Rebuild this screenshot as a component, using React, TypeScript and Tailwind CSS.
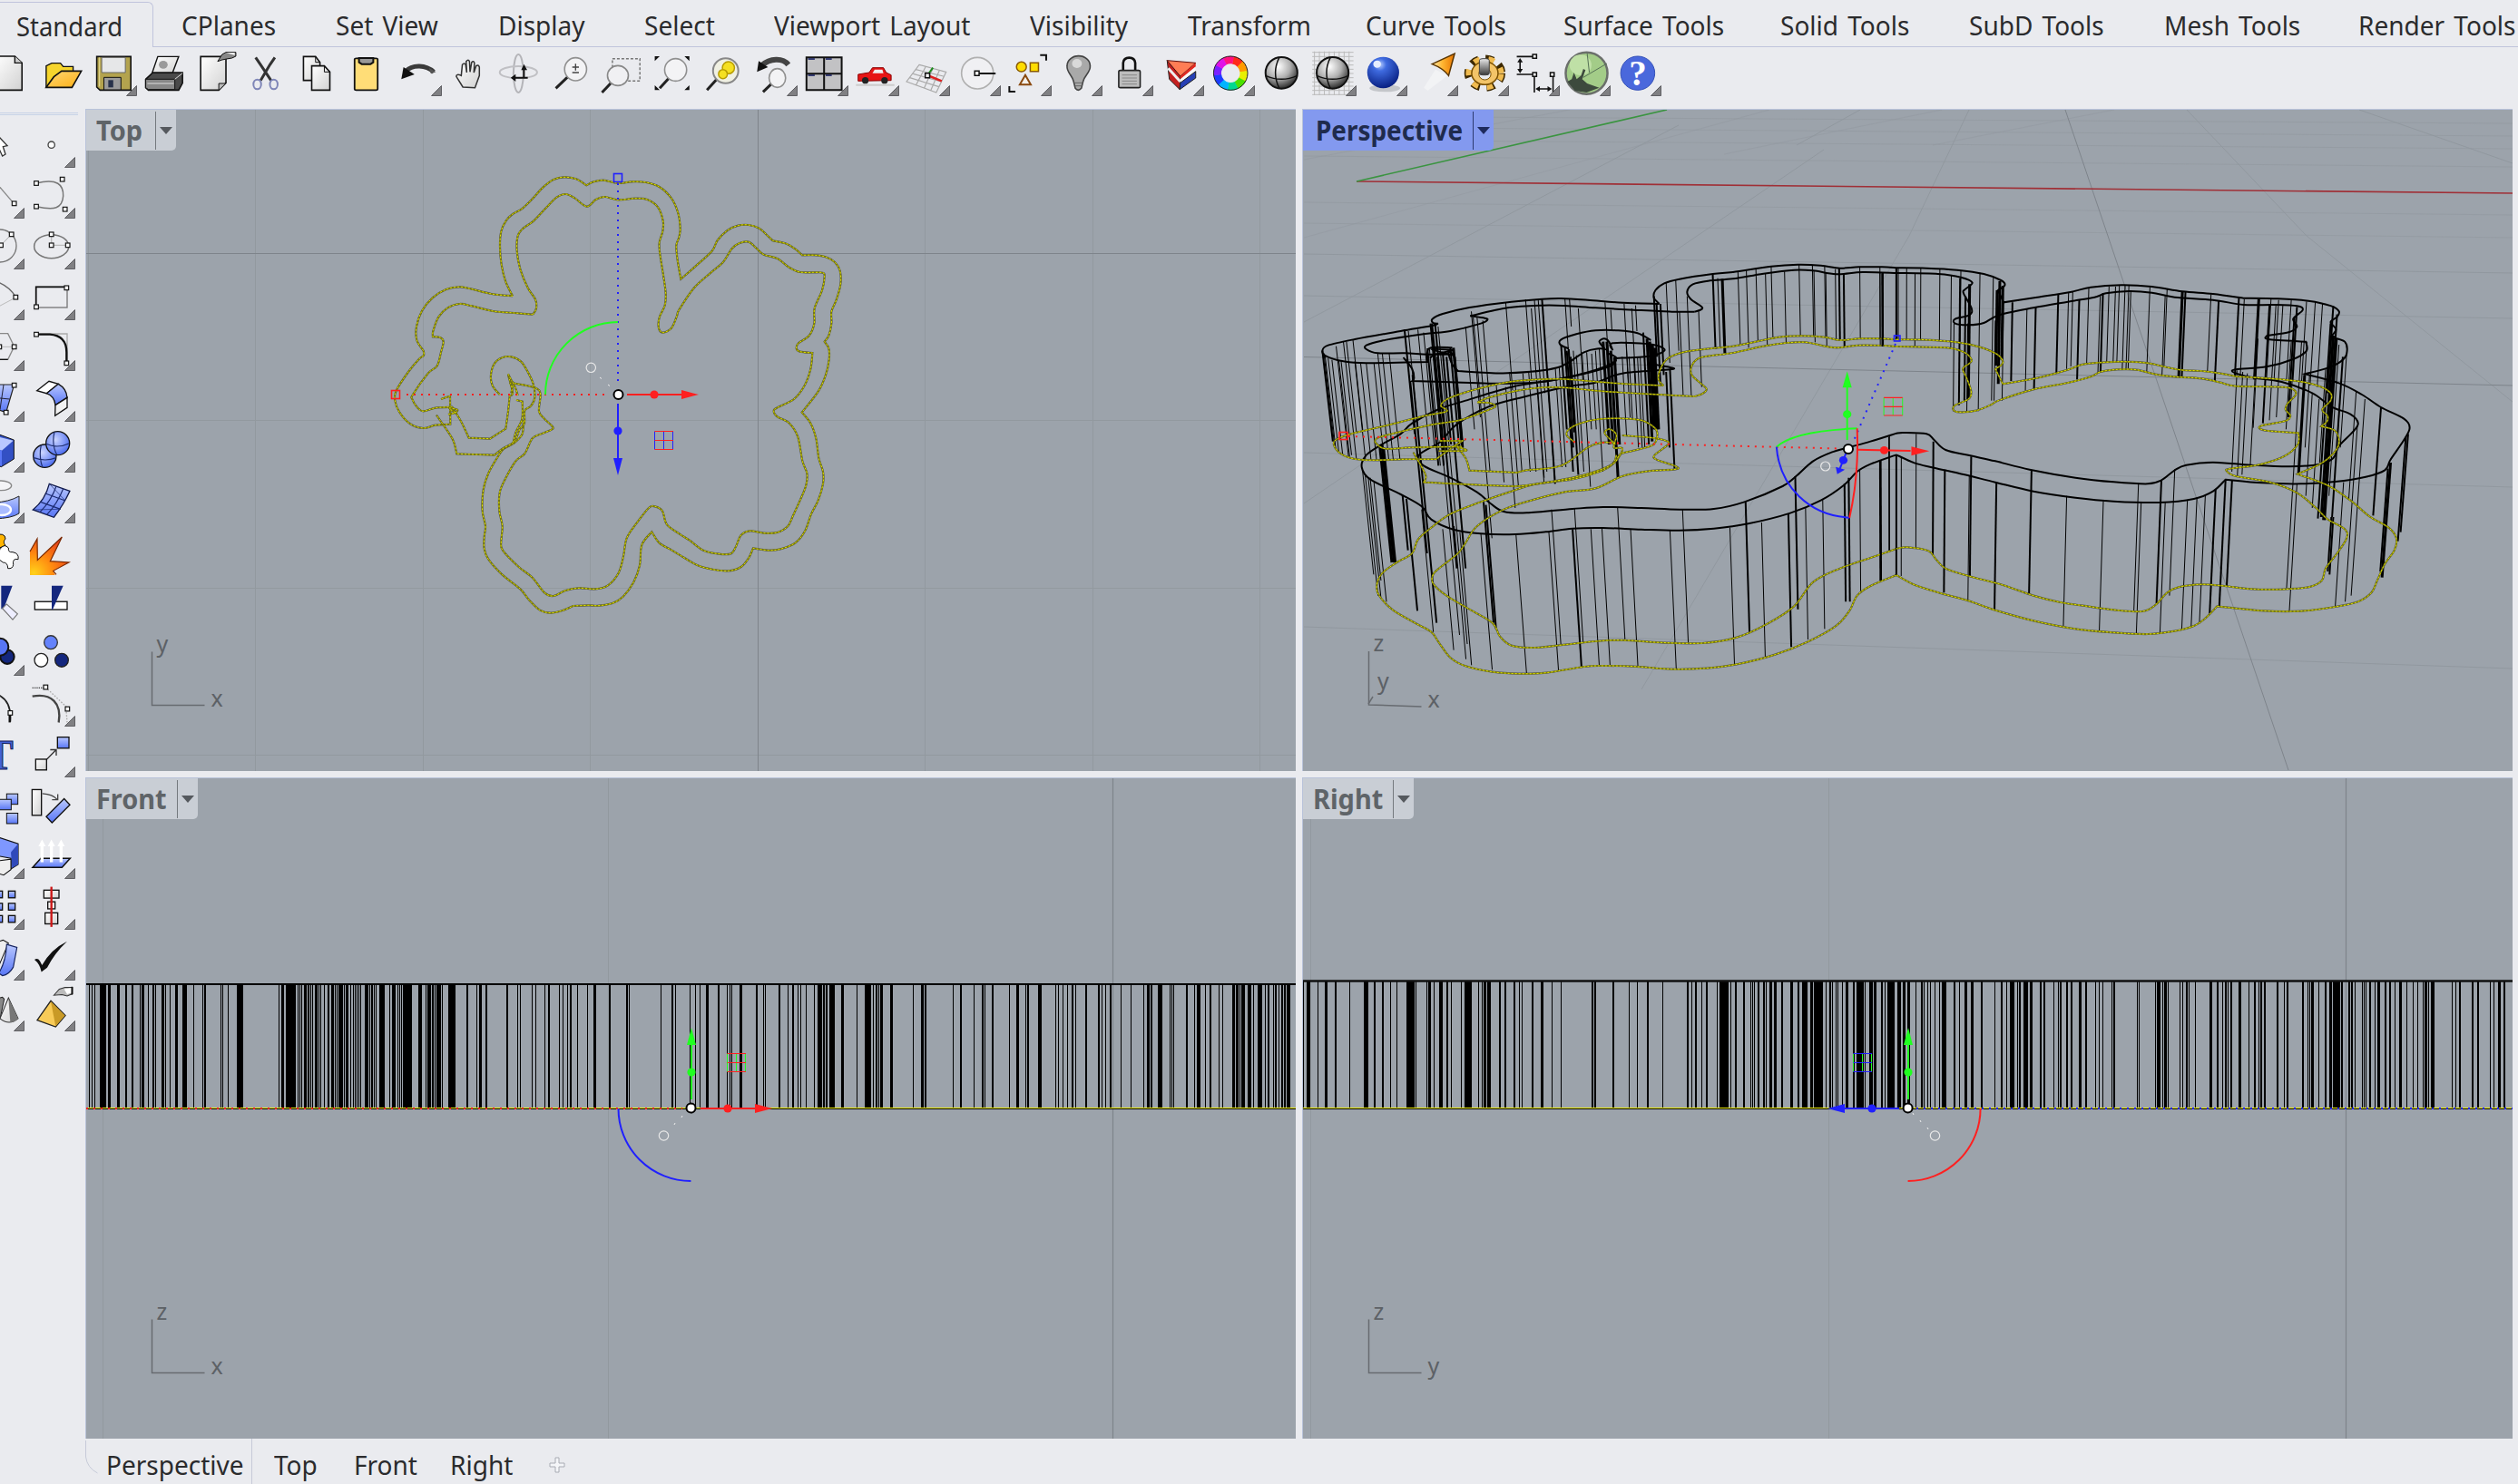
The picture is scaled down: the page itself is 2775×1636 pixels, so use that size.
import React from "react";

/* ---------- geometry helpers ---------- */

// Smooth path through points; "|" marks a sharp corner.
function smooth(src: string): string {
  let out = "";
  let prev: number[] | null = null;
  for (const part of src.split("|")) {
    const pts = part.trim().split(/\s+/).map((p) => p.split(",").map(Number));
    if (prev) pts.unshift(prev);
    else out += `M${pts[0][0]} ${pts[0][1]}`;
    for (let i = 0; i < pts.length - 1; i++) {
      const a = pts[Math.max(0, i - 1)];
      const b = pts[i];
      const c = pts[i + 1];
      const d = pts[Math.min(pts.length - 1, i + 2)];
      out += `C${b[0] + (c[0] - a[0]) / 6} ${b[1] + (c[1] - a[1]) / 6} ${c[0] - (d[0] - b[0]) / 6} ${c[1] - (d[1] - b[1]) / 6} ${c[0]} ${c[1]}`;
    }
    prev = pts[pts.length - 1];
  }
  return out;
}

function Selected({ d }: { d: string }) {
  return (
    <>
      <path d={d} fill="none" stroke="#3a3c30" strokeWidth={2.2} strokeOpacity={0.7} />
      <path d={d} fill="none" stroke="#808000" strokeWidth={1.5} />
      <path d={d} fill="none" stroke="#e0e000" strokeWidth={1} strokeDasharray="2 2" />
    </>
  );
}

/* ---------- curve data ---------- */

const topCurves = [
  "435,439 412,392 398,335 393,275 397,225 413,190 435,168 465,151 500,118 535,80 570,54 605,46 645,52 679,73 | 700,62 735,56 783,66 830,61 875,63 920,78 960,116 982,165 989,215 985,245 976,272 980,320 991,383 | 1040,340 1094,290 1112,255 1145,222 1180,206 1215,204 1250,215 1275,237 1295,256 | 1340,266 1370,284 1392,304 | 1435,304 1470,310 1500,327 1517,355 1519,400 1505,452 1489,490 1489,530 1480,570 1466,590 | 1480,612 1481,650 1470,700 1445,755 1391,824 | 1420,860 1438,910 1447,975 1461,1020 1461,1060 1445,1115 1422,1160 1402,1215 1370,1255 1320,1276 1280,1280 1230,1273 | 1215,1306 1190,1335 1150,1348 1100,1344 1045,1329 990,1297 960,1279 920,1256 895,1219 | 862,1262 855,1330 835,1385 800,1433 765,1455 720,1463 685,1462 635,1464 | 600,1479 560,1487 525,1478 490,1445 460,1408 400,1360 355,1310 341,1275 341,1235 345,1200 335,1150 338,1080 355,1025 385,972 405,945 440,925 467,895 470,850",
  "435,439 365,432 300,416 260,409 215,417 170,445 135,488 117,540 118,585 140,620 | 141,635 125,648 90,690 50,752 46,785 60,822 95,861 140,876 180,866 229,863 | 228,770 | 198,780",
  "502,500 440,495 370,489 300,472 260,465 220,478 190,508 172,555 171,574 | 195,576 206,590 198,625 185,670 155,695 105,765 103,780 120,808 140,820 180,809 235,806 | 265,855 290,908 | 360,911 | 412,878 | 420,820 425,770 | 435,758 420,700",
  "502,500 513,480 510,450 485,412 460,350 449,290 452,240 470,215 505,190 545,148 580,113 610,102 640,115 680,143 710,120 740,111 783,121 840,116 880,120 915,145 932,190 931,225 920,262 922,300 933,370 941,430 938,470 920,510 918,545 932,560 960,545 978,505 985,485 1035,412 1090,362 1130,328 1160,282 1185,264 1215,260 1240,280 1265,302 1310,315 1350,345 1385,360 1430,361 1460,362 1466,375 1458,420 1433,480 1432,530 1415,570 1380,595 1373,612 1385,623 1426,627 | 1420,680 1400,735 1365,780 1310,808 1298,820 1310,838 1350,860 1378,905 1393,985 1408,1025 1405,1065 1385,1115 1362,1165 1345,1200 1310,1221 1265,1223 1220,1216 1190,1230 1172,1270 1155,1292 1110,1291 1065,1280 1020,1247 990,1228 945,1195 930,1150 905,1135 885,1140 845,1190 812,1240 801,1300 785,1355 750,1396 710,1408 655,1405 610,1413 570,1431 540,1420 500,1370 455,1335 402,1280 397,1250 401,1200 391,1150 392,1090 410,1045 445,985 475,960 500,910 530,895 565,880 566,870 540,845 522,820 527,765 515,745 480,735 435,727",
  "392,765 368,735 363,700 375,662 400,643 430,640 462,655 485,690 503,730 508,775 495,803 475,818 474,860 458,880 440,920 400,945 375,965 | 250,961 | 235,910 183,833",
  "420,697 432,720 445,745 452,768",
  "425,730 437,726 430,760",
  "447,783 467,788 | 466,845 445,890 437,925",
  "222,830 245,825 252,815 225,810 250,828",
];

const perspBottomL = [
  "958,495 860,490 780,482 700,474 650,474 560,482 480,503 400,535 375,560 390,575 385,583 330,596 240,625 140,655 100,675 96,695 115,722 150,738 200,742 280,739 362,739 | 400,705 432,678 | 372,678",
  "1040,531 960,526 860,519 780,512 700,502 650,501 580,511 500,535 471,551 | 500,552 518,562 505,573 430,608 350,625 230,660 206,672 205,685 230,704 300,700 430,697",
  "412,690 440,735 450,776 | 575,783 | 600,775 690,760 760,700 800,683 830,687 | 805,655 808,643 820,640 835,660 828,700 850,702 840,735 825,752",
  "370,712 442,710 410,695",
  "958,495 945,475 950,440 970,405 1010,385 1070,374 1140,365 1200,350 1260,335 1320,331 1380,335 1420,345 1470,340 1530,340 1568,343",
  "1040,531 1060,522 1071,507 1055,487 1032,460 1032,430 1050,405 1080,397 1140,387 1220,365 1280,354 1330,352 1370,362 1410,370 1470,362 1530,363 1568,366",
  "1568,1122 1500,1158 1465,1190 1445,1240 1410,1290 1340,1340 1250,1385 1150,1417 1070,1430 980,1433 880,1424 800,1422 750,1425 650,1445 580,1448 510,1442 440,1423 400,1395 370,1345 350,1310 310,1282 250,1238 215,1192 207,1160 220,1118 260,1080 300,1050 315,1005 350,965 400,920 480,880 560,845 620,822 720,805 790,780 825,755 835,725",
  "1568,1035 1500,1065 1420,1100 1350,1145 1300,1225 1230,1283 1150,1328 1060,1347 950,1345 850,1337 780,1341 700,1352 620,1362 560,1355 530,1325 510,1280 450,1235 390,1190 355,1150 355,1120 375,1095 420,1050 440,1015 470,960 540,905 620,872 700,847 780,835 850,795 920,778 990,772 990,762 940,740 935,725 970,690 965,678 930,668 850,660",
  "725,682 705,660 710,640 740,620 790,606 850,604 900,610 935,635 942,660 930,692 880,710 845,722 830,750 790,775 720,800 600,825 540,827 330,815 | 335,790 303,716",
];

const perspBottomR = [
  "71,343 150,344 230,352 290,368 335,392 350,415 345,428 330,440 | 350,490 | 440,470 520,443 560,425 620,418 670,416 730,421 780,435 820,444 870,447 920,455 960,465 | 1050,472 1130,482 1180,498 1208,520 1208,545 1186,575 1200,595 1198,615 1183,630 | 1220,645 1230,685 1215,720 1180,755 1121,788 | 1200,825 1260,875 1310,928 1360,965 1380,1000 1375,1040 1350,1085 1330,1140 1315,1180 1280,1210 1220,1227 1130,1241 1030,1240 911,1225 | 880,1265 850,1290 800,1307 730,1317 640,1312 540,1300 430,1273 330,1238 260,1207 190,1183 120,1155 71,1122",
  "71,366 150,368 210,371 250,386 268,410 262,422 245,440 255,470 267,515 260,540 225,560 220,575 235,583 280,578 320,558 340,544 430,508 520,486 580,466 605,450 650,442 700,443 750,458 800,466 870,472 920,485 960,497 1080,500 1110,508 1117,525 1095,555 1090,575 1103,595 1090,612 1030,627 1022,637 1045,645 1124,652 | 1122,690 1085,730 1020,757 945,770 936,778 960,795 1050,815 1120,850 1170,900 1200,937 1245,970 1250,1000 1225,1050 1195,1100 1185,1140 1150,1162 1080,1169 1000,1168 930,1158 870,1153 810,1162 780,1180 750,1220 715,1242 640,1237 560,1223 500,1212 430,1190 350,1155 260,1125 200,1100 175,1070 155,1042 100,1030 71,1035",
];

const perspTopL = [
  "947,225 850,221 760,212 690,207 640,209 560,218 450,237 380,258 353,275 355,288 368,290 | 350,298 270,315 150,342 80,362 65,380 75,398 120,415 180,421 340,417 | 345,372 405,370",
  "1040,251 980,251 880,245 780,238 700,231 640,230 550,238 452,265 | 490,272 497,278 480,290 400,315 330,325 220,347 180,362 180,375 210,388 280,388 340,392 410,392 | 395,385 405,425 420,447 | 550,454 680,436 750,385 790,373 805,375 | 790,350 803,340 815,350 825,378 | 825,355 920,358 958,372 955,385 920,398 830,405",
  "347,405 360,392 410,378 | 350,375 408,395",
  "277,402 300,440 305,470 300,480 | 400,484 500,488 620,485 700,470 800,435 835,405 810,388",
  "710,373 688,360 690,343 730,325 780,313 840,313 890,322 925,345",
  "947,225 933,205 937,180 960,157 1000,143 1087,126 1140,120 1240,101 1310,95 1370,98 1420,107 1470,103 1530,103 1568,106",
  "1040,251 1060,238 1030,210 1020,185 1035,160 1080,148 1140,142 1220,125 1300,113 1350,115 1410,127 1480,120 1568,123",
  "1568,724 1500,755 1465,780 1430,825 1370,875 1290,917 1180,952 1090,968 1000,974 900,971 800,966 720,968 650,979 570,987 480,985 410,972 350,938 325,895 270,855 190,805 168,765 180,725 220,690 270,655 300,620 370,573 440,545 560,500 680,475 770,450 820,430 835,410",
  "1568,653 1500,680 1442,700 1400,715 1350,745 1305,795 1270,828 1170,880 1090,903 1000,905 900,900 800,897 720,903 600,916 540,912 505,885 470,848 400,800 330,760 318,725 375,680 415,625 500,565 600,530 700,500 780,485 850,455 975,442 975,435 930,425",
];

const perspTopR = [
  "71,106 150,107 230,113 300,126 345,147 355,163 337,180 | 352,220 | 440,203 530,185 580,170 660,163 740,168 820,184 900,192 980,206 | 1070,208 1150,215 1210,232 1230,250 1225,268 1208,285 1222,310 1208,335 | 1245,350 1250,390 1235,415 1200,437 1141,457 | 1230,487 1290,525 1340,567 1400,605 1415,635 1400,675 1365,740 1350,775 1300,797 1220,813 1130,820 1030,817 933,806 | 900,845 850,870 760,882 640,878 540,866 430,845 330,815 250,790 170,767 120,752 71,724",
  "71,123 180,126 240,137 270,155 250,178 247,190 268,240 262,262 225,275 225,290 260,295 300,288 340,262 430,238 520,218 590,203 620,190 680,183 740,188 800,203 900,212 980,228 1060,228 1120,232 1135,245 1110,275 1120,300 1100,318 1042,330 | 1045,342 1143,350 | 1145,380 1110,408 1040,433 960,442 955,452 1000,468 1080,483 1160,520 1210,565 1260,590 1280,620 1265,650 1230,695 1215,735 1180,755 1100,763 1000,758 900,749 830,758 800,775 765,808 730,820 640,814 540,800 420,773 330,745 265,727 200,708 170,675 150,655 90,651 71,653",
];

// Wall edges: x, top, bottom and an optional width.
const wallsL =
  "65,380,680,2 69,388,690 72,395,705 80,405,715 90,410,725 101,365,733 108,412,730 114,414,725 120,350,738 150,415,740 128,350,650 145,345,645 165,420,740 180,422,742 200,420,742 210,390,742 222,390,742 240,390,740 170,775,1120 177,790,1190 190,800,1140 215,690,1080,3 221,690,1080,3 226,700,1080,2 185,800,1195 200,815,1210 280,310,655,2 290,315,650 275,860,1040,2 285,870,1240,2 295,480,1050,2 301,460,1280,2 315,310,700 325,905,1310 330,320,700 340,372,760,2 348,290,760,2 352,290,720,2 360,290,720,2 368,300,1350 345,370,760 355,380,1320 366,400,1100,2 380,385,690,2 390,400,1100,2 400,370,700,2 408,370,700,3 412,400,700,2 380,970,1370 410,960,1400 425,980,1420 440,300,640 455,250,600 460,270,1000 470,270,780 485,280,560 487,880,1280,2 493,890,1300,2 480,985,1435 520,489,815 545,220,510 555,450,830 572,990,1448 545,500,900 570,490,780 590,455,780 597,210,480 605,448,780 612,240,820 620,210,780 630,210,520 640,210,820,2 658,980,1440 665,905,1355 628,490,800 655,480,810 675,440,765 685,435,765 700,208,475 712,210,300 720,970,1425,2 725,900,1345 735,240,480 690,360,640,2 700,370,780,2 705,380,700,2 710,375,650,2 715,400,790,2 722,380,720 730,395,780 745,390,830 757,385,640 770,390,640 780,380,780 790,375,650 768,970,1425 797,968,1420 800,350,690,3 810,350,680,3 805,220,480 820,380,800,3 830,400,690,3 820,245,310 838,900,1338 855,225,490 850,400,660 860,350,600 868,400,605 872,972,1424 875,240,490 885,230,315 880,400,700 890,400,700 897,400,700 905,320,690,2 915,340,680,3 922,350,640,3 928,360,640,4 935,370,640,3 975,975,1433 1008,905,1345 933,200,400,2 940,225,490,2 950,225,460,2 965,450,700,2 975,440,770,2 965,155,420 990,145,380 1000,250,530 1020,200,528 1050,245,500 1087,127,375,2 1100,140,370 1112,142,388,3 1153,118,362 1175,115,370 1200,107,350 1225,125,365 1240,102,340 1275,118,355 1313,96,332 1348,99,333 1352,115,352 1380,100,338 1383,122,365 1408,110,342 1418,107,345,2 1430,125,368,2 1472,104,340 1525,122,365 1532,122,363,2 1132,965,1418 1173,880,1312,2 1215,948,1395 1285,918,1360,2 1303,795,1235,2 1330,898,1335 1375,872,1300 1432,820,1210,2 1443,800,1210,2 1472,775,1175 1525,742,1140,2 1548,665,1045";

const wallsR =
  "28,104,342 34,124,366,2 71,107,343,2 76,107,343 98,108,344 120,125,368 135,108,345 185,109,345 215,130,372 240,115,350 222,290,580 238,140,560,2 252,200,545,2 263,160,540,3 258,290,580 290,122,580 325,135,545 330,280,545 335,180,430,3 342,150,490,3 350,165,410,3 352,220,545 375,220,480,2 413,242,512 436,235,505,2 495,195,455,2 522,188,440 533,185,432 550,212,475,2 575,172,425 605,195,452 612,190,450,2 628,168,418 645,168,415 655,163,415 670,163,440 680,163,440 685,185,440 735,170,450 780,176,435 775,195,460 820,184,465,3 828,186,465,2 895,193,450 915,215,480,2 968,205,465,2 982,210,465 1020,210,475,3 1048,230,620,2 1052,210,475 1065,228,610 1072,212,475 1083,230,600 1105,213,475 1120,235,480,2 1113,270,600,2 1117,275,600 1145,217,480 1168,218,495 1187,222,500 1215,232,520,2 1225,260,560,2 963,445,780 978,450,795 990,455,790 1018,340,635 1010,470,765 1105,350,640 1140,460,790,3 1146,350,640 1153,460,700 1120,820,1242 1132,350,1165 1160,520,860 1178,540,900 1195,440,750 1208,290,935,2 1215,330,930,3 1222,340,940,4 1230,360,860 1240,400,930,2 1250,390,700 1215,930,1120,2 1210,930,1110,2 1242,815,1225 1275,515,870 1278,630,1210 1298,540,1190 1340,567,925,2 1365,750,1130,3 1358,770,1110,2 1405,665,1010,2 1411,655,980,2 30,742,1140,2 53,660,1040 71,725,1122,2 84,730,1125 123,655,1032 168,680,1055,2 198,773,1180,2 267,730,1125,2 262,793,1207 333,817,1238,2 425,775,1185,2 517,860,1292 613,877,1306 705,820,1240 712,882,1316 765,808,1215,2 775,882,1312 800,772,1190 833,876,1300 858,868,1292 880,858,1283 907,838,1250,2 933,806,1225,2 950,808,1158,2";

// Silhouette bars: start and width in each half of the elevation views.
const frontL =
  "18 2,25 2,31 3,45 10,55 4,65 7,87 7,108 4,123 5,143 2,148 6,164 2,174 2,178 3,182 3,197 7,206 2,217 3,231 6,248 8,257 2,276 3,298 2,302 5,343 2,347 2,361 2,383 8,393 6,486 2,493 6,504 19,524 5,533 3,538 2,542 2,549 7,557 2,561 2,565 3,570 2,575 6,585 2,590 2,598 2,606 5,617 7,626 2,629 3,635 10,647 3,651 5,656 3,664 2,669 2,674 2,679 2,684 2,688 2,700 9,711 3,715 4,721 3,726 3,735 10,746 2,759 3,766 9,780 3,784 2,788 3,792 13,806 9,831 6,838 3,850 2,853 9,864 2,868 2,872 2,876 2,879 9,889 3,905 8,914 9,949 4,974 2,980 6,997 5,1048 5,1075 2,1082 2,1111 2,1120 2,1142 3,1152 5,1178 2,1187 2,1198 3,1206 5,1223 2,1248 2,1263 7,1302 5,1344 4,1351 2,1429 2,1457 5,1466 3,1500 3,1514 2,1525 2,1541 7";
const frontR =
  "0 2,26 5,48 3,55 3,60 2,81 7,123 5,141 2,145 3,180 5,203 2,215 5,228 3,235 3,249 2,270 2,280 12,292 3,296 3,300 4,308 6,317 6,340 6,378 2,399 16,419 3,427 4,434 3,437 6,464 6,521 2,543 7,552 5,623 2,640 4,676 2,696 4,703 3,721 5,766 2,785 6,807 2,812 5,839 10,883 2,890 2,902 2,913 2,925 4,934 2,960 5,991 5,1001 2,1010 2,1022 4,1049 2,1075 2,1107 2,1117 6,1126 5,1143 8,1152 3,1174 2,1178 2,1183 3,1216 5,1236 2,1243 8,1264 2,1276 5,1298 3,1307 3,1333 7,1343 6,1351 2,1355 8,1371 10,1386 2,1397 12,1416 2,1423 4,1437 2,1441 5,1450 3,1457 5,1464 5,1471 9";
const rightL =
  "14 2,24 8,51 3,69 6,94 4,131 3,168 11,194 4,214 5,235 3,251 3,276 11,288 6,295 2,299 2,327 3,332 7,346 3,360 9,379 4,390 2,415 3,424 13,438 5,459 2,467 3,473 7,481 10,513 4,526 4,549 4,563 3,570 2,594 4,618 7,646 2,669 2,747 4,754 5,800 4,842 2,862 3,888 4,927 2,989 4,1001 2,1011 5,1026 2,1038 4,1066 2,1072 21,1094 3,1099 3,1111 5,1132 5,1151 3,1156 2,1161 3,1169 5,1182 4,1190 3,1199 7,1211 7,1229 5,1252 7,1271 5,1281 6,1289 7,1303 7,1311 15,1327 8,1342 2,1352 5,1359 3,1367 2,1373 2,1384 2,1393 6,1411 5,1420 11,1433 6,1441 2,1453 10,1464 7,1483 4,1491 2,1498 6,1506 12,1524 9,1538 6,1550 7";
const rightR =
  "26 2,39 4,46 3,56 2,63 2,74 3,86 2,94 12,123 4,137 2,150 6,168 6,193 4,228 2,245 5,258 2,267 11,286 2,290 5,302 12,318 7,344 4,353 5,379 2,390 2,396 4,411 5,422 4,443 7,460 5,486 3,495 2,504 2,527 3,533 4,592 3,597 2,639 2,643 8,657 3,663 6,671 3,702 2,709 2,718 4,725 2,741 2,779 6,797 4,811 2,818 4,825 2,832 4,853 6,878 2,893 5,904 3,908 5,917 5,951 5,968 2,975 4,1015 4,1029 2,1034 2,1038 6,1056 3,1073 5,1086 6,1094 19,1116 5,1134 5,1140 5,1151 2,1168 2,1173 3,1178 2,1188 5,1201 2,1209 7,1227 4,1238 4,1253 2,1264 7,1282 3,1299 2,1310 2,1324 3,1328 3,1332 5,1339 3,1344 10,1398 3,1408 2,1416 4,1449 5,1463 5,1496 2,1505 3,1517 7,1531 4";

function barPath(src: string, x0: number, scale: number, y: number, h: number): string {
  return src
    .split(",")
    .map((s) => {
      const [x, w] = s.split(" ").map(Number);
      const left = Math.round(x0 + x / scale);
      const width = Math.max(1, Math.ceil(w / scale - 0.35));
      return `M${left} ${y}h${width}v${h}h-${width}z`;
    })
    .join("");
}

function Walls({ src, shift }: { src: string; shift: number }) {
  return (
    <>
      {src.split(" ").map((s, i) => {
        const [x, y1, y2, w = 1] = s.split(",").map(Number);
        const lean = 0.095 * (1 - (x + shift) / 1568) * (x + shift > 1568 ? 0.75 : 1);
        return <path key={i} d={`M${x} ${y1}L${x + (y2 - y1) * lean} ${y2}`} stroke="#000" strokeWidth={w} />;
      })}
    </>
  );
}

/* ---------- viewports ---------- */

function Viewport({
  name, active, x, y, w, h, label, children,
}: { name: string; active?: boolean; x: number; y: number; w: number; h: number; label: string; children: React.ReactNode }) {
  return (
    <section className="relative overflow-hidden border-l border-t border-[#b9c3da] bg-[#9ca3ab]">
      <svg className="absolute inset-0 h-full w-full" viewBox={`${x} ${y} ${w} ${h}`} preserveAspectRatio="xMinYMin slice">
        {children}
      </svg>
      <div className={`relative flex h-[45px] items-center rounded-br-[5px] ${active ? "bg-[#8399ef]" : "bg-[#c9ced5]"} ${label}`}>
        <div className={`flex-1 text-[29.5px] leading-[39px] font-bold ${active ? "pl-[14px] text-[#1f2b4d]" : "pl-[11px] text-[#5f6468]"}`}>
          <span className={`inline-block origin-left ${active ? "scale-x-[0.945]" : "scale-x-[0.98]"}`}>{name}</span>
        </div>
        <div className={`h-[42px] w-px ${active ? "bg-[#2c3a70]" : "bg-[#74797e]"}`} />
        <div className="flex w-[22px] justify-center">
          <svg className="h-[8px] w-[14px]" viewBox="0 0 14 8">
            <path d="M0 0H14L7 8Z" fill={active ? "#1f2b5d" : "#55595e"} />
          </svg>
        </div>
      </div>
    </section>
  );
}

function Axes({ x, y, h, v, tilt = 0 }: { x: number; y: number; h: string; v: string; tilt?: number }) {
  return (
    <g fontFamily="'Noto Sans', sans-serif" fontSize={25} fill="#5d6166">
      <path d={`M${x} ${y - 59}V${y}L${x + 58} ${y + tilt}`} fill="none" stroke="#676b70" strokeWidth={1.5} />
      <text x={x + 5} y={y - 59}>{v}</text>
      <text x={x + 65} y={y + 1 + tilt}>{h}</text>
    </g>
  );
}

function Arrow({ x, y, dx, dy, color }: { x: number; y: number; dx: number; dy: number; color: string }) {
  return (
    <g stroke={color} fill={color}>
      <path d={`M${x + dx * 10} ${y + dy * 10}L${x + dx * 70} ${y + dy * 70}`} strokeWidth={2} />
      <circle cx={x + dx * 40} cy={y + dy * 40} r={4.6} stroke="none" />
      <path stroke="none" d={`M${x + dx * 89} ${y + dy * 89}L${x + dx * 70 - dy * 5} ${y + dy * 70 + dx * 5}L${x + dx * 70 + dy * 5} ${y + dy * 70 - dx * 5}Z`} />
    </g>
  );
}

function Origin({ x, y }: { x: number; y: number }) {
  return <circle cx={x} cy={y} r={5} fill="#fff" stroke="#000" strokeWidth={2} />;
}

function PlaneBox({ x, y, hc, vc }: { x: number; y: number; hc: string; vc: string }) {
  return (
    <>
      <path d={`M${x} ${y}v20m10-20v20m10-20v20`} stroke={vc} strokeWidth={1} fill="none" />
      <path d={`M${x} ${y}h20.500m-20.500 10h20.500m-20.500 10h20.500`} stroke={hc} strokeWidth={1} fill="none" />
    </>
  );
}

const ns = "[&_path]:[vector-effect:non-scaling-stroke] [&_ellipse]:[vector-effect:non-scaling-stroke] [&_rect]:[vector-effect:non-scaling-stroke] [&_circle]:[vector-effect:non-scaling-stroke]";
const RED = "#ff2020";
const BLUE = "#2020ff";
const GREEN = "#20ff20";

function TopView() {
  return (
    <>
      <path d="M97.500 121V850M281.500 121V850M466.500 121V850M650.500 121V850M1019.500 121V850M1204.500 121V850M1388.500 121V850M95 463.500H1428M95 648.500H1428M95 832.500H1428" stroke="#92999f" strokeWidth={1} />
      <path d="M835.500 121V850M95 279.500H1428" stroke="#7e848b" strokeWidth={1} />
      <Axes x={167.5} y={777.5} h="x" v="y" />
      <g transform="translate(420 180) scale(0.33333)" className={ns}>
        {topCurves.map((c, i) => <Selected key={i} d={smooth(c)} />)}
      </g>
      <path d="M448 435H672" stroke={RED} strokeWidth={2} strokeDasharray="2 6" />
      <path d="M681 202V426" stroke={BLUE} strokeWidth={2} strokeDasharray="2 6" />
      <rect x={431.5} y={430.500} width={9} height={9} fill="none" stroke={RED} strokeWidth={1.6} />
      <rect x={676.5} y={191.500} width={9} height={9} fill="none" stroke={BLUE} strokeWidth={1.6} />
      <path d="M601 435A80.500 80 0 0 1 681 355" fill="none" stroke={GREEN} strokeWidth={2} />
      <circle cx={651.3} cy={405.300} r={5.2} fill="none" stroke="#e8e8e8" strokeWidth={1.200} />
      <path d="M661 416l2 1.500M670 424l2 1.500" stroke="#eee" />
      <Arrow x={681} y={435} dx={1} dy={0} color={RED} />
      <Arrow x={681} y={435} dx={0} dy={1} color={BLUE} />
      <PlaneBox x={721.5} y={475.500} hc={RED} vc={BLUE} />
      <Origin x={681.5} y={435} />
    </>
  );
}

function PerspectiveView() {
  return (
    <>
      <g stroke="#91989f" strokeWidth={1} fill="none">
        <path d="M1560 121L1437 143M1730 121L1437 176M1950 121L1437 262M2140 121L1900 170M2330 121L2130 160" strokeOpacity={0.5} />
        <path d="M1437 128L2769 136M1437 140L2769 150M1437 154L2769 164M1437 172L2769 184M1437 223L2769 237M1437 246L2769 262" strokeOpacity={0.6} />
        <path d="M1437 280L2769 301M1437 326L2769 351M1437 499L2769 537M1437 691L2769 737" />
        <path d="M1437 355L1850 138M1437 555L2010 165M1809 760L2104 260L2170 121M2542 260L2410 121M2542 260L2769 443M2600 121L2769 180M1980 160L2050 121" />
      </g>
      <path d="M2276 121L2323 260L2522 849M1437 393.500L2769 425" stroke="#7e848b" strokeWidth={1} fill="none" />
      <path d="M1495 200L2769 213" stroke="#a02f36" strokeWidth={1.6} />
      <path d="M1495 200L1837 121" stroke="#3a9440" strokeWidth={1.6} />
      <Axes x={1508.5} y={777} h="x" v="z" tilt={2} />
      <path d="M1508 776L1513 768" stroke="#676b70" strokeWidth={1.5} />
      <text x={1518} y={760} fontFamily="'Noto Sans', sans-serif" fontSize={25} fill="#5d6166">y</text>
      <g transform="translate(1430 260) scale(0.42092 0.33333)" className={ns} fill="none">
        <Walls src={wallsL} shift={0} />
        {perspTopL.map((c, i) => <path key={i} d={smooth(c)} stroke="#000" strokeWidth={2} />)}
        {perspBottomL.map((c, i) => <Selected key={i} d={smooth(c)} />)}
      </g>
      <g transform="translate(2060 260) scale(0.42092 0.33333)" className={ns} fill="none">
        <Walls src={wallsR} shift={1497} />
        {perspTopR.map((c, i) => <path key={i} d={smooth(c)} stroke="#000" strokeWidth={2} />)}
        {perspBottomR.map((c, i) => <Selected key={i} d={smooth(c)} />)}
      </g>
      <path d="M1486 481L2027 494.500" stroke={RED} strokeWidth={2} strokeDasharray="2 6" />
      <path d="M2089 379L2042 488" stroke={BLUE} strokeWidth={2} strokeDasharray="2 6" />
      <rect x={1476} y={476.500} width={9} height={8} fill="none" stroke={RED} strokeWidth={1.6} />
      <rect x={2087.500} y={370} width={6.500} height={6} fill="none" stroke={BLUE} strokeWidth={1.6} />
      <g transform="translate(1430 260) scale(0.42092 0.33333)" className={ns} fill="none" strokeWidth={2}>
        <path d="M1254 698Q1300 645 1465 637" stroke={GREEN} />
        <path d="M1254 698C1262 830 1340 925 1445 932" stroke={BLUE} />
        <path d="M1465 637C1469 760 1460 850 1445 932" stroke={RED} />
        <path d="M1439 675V500" stroke={GREEN} />
        <path d="M1427 502H1451L1439 448Z" fill={GREEN} />
        <ellipse cx={1439} cy={590} rx={11} ry={13} fill={GREEN} />
        <path d="M1437 715L1420 770" stroke={BLUE} />
        <path d="M1409 764L1433 773L1413 788Z" fill={BLUE} />
        <ellipse cx={1429} cy={742} rx={11} ry={13} fill={BLUE} />
        <path d="M1465 707L1605 711" stroke={RED} />
        <ellipse cx={1536} cy={709} rx={11} ry={13} fill={RED} />
        <path d="M1607 697L1654 712L1607 727Z" fill={RED} />
        <path d="M1535 535V594M1559 535V594M1584 535V594" stroke={GREEN} strokeWidth={1} />
        <path d="M1535 535H1584M1535 565H1584M1535 594H1584" stroke={RED} strokeWidth={1.2} />
        <ellipse cx={1382} cy={762} rx={12} ry={15} stroke="#e8e8e8" strokeWidth={1.2} />
        <ellipse cx={1442} cy={705} rx={12} ry={15} fill="#fff" stroke="#000" />
      </g>
    </>
  );
}

function FrontView() {
  return (
    <>
      <path d="M113.500 857V1590M670.500 857V1590" stroke="#92999f" strokeWidth={1} />
      <path d="M1226.500 857V1590" stroke="#7e848b" strokeWidth={1.2} />
      <path d={barPath(frontL, 90, 2.24, 1084, 138)} />
      <path d={barPath(frontR, 780, 2.306, 1084, 138)} />
      <path d="M95 1085H1428M95 1222H1428" stroke="#000" strokeWidth={2} />
      <path d="M95 1221.500H1428" stroke="#f2f200" strokeWidth={1} />
      <path d="M95 1222H752" stroke={RED} strokeWidth={2} strokeDasharray="2 6" />
      <path d="M681.500 1222A80 80 0 0 0 761.400 1302" fill="none" stroke={BLUE} strokeWidth={2} />
      <PlaneBox x={801.500} y={1161.500} hc={RED} vc={GREEN} />
      <Arrow x={762} y={1222} dx={1} dy={0} color={RED} />
      <Arrow x={762} y={1222} dx={0} dy={-1} color={GREEN} />
      <path d="M743 1240l1-2M751 1232l1-2" stroke="#eee" />
      <circle cx={731.500} cy={1252} r={5.200} fill="none" stroke="#e8e8e8" strokeWidth={1.200} />
      <Origin x={761.500} y={1221.500} />
      <Axes x={167.500} y={1513.500} h="x" v="z" />
    </>
  );
}

function RightView() {
  return (
    <>
      <path d="M1444.500 857V1590M2015.500 857V1590" stroke="#92999f" strokeWidth={1} />
      <path d="M2585.500 857V1590" stroke="#7e848b" strokeWidth={1.2} />
      <path d={barPath(rightL, 1430, 2.306, 1081, 141)} />
      <path d={barPath(rightR, 2100, 2.323, 1081, 141)} />
      <path d="M1436 1081.500H2769" stroke="#111" strokeWidth={2.400} />
      <path d="M1436 1222H2769" stroke="#000" strokeWidth={2} />
      <path d="M1436 1221.500H2769" stroke="#f2f200" strokeWidth={1} />
      <path d="M2112 1222H2769" stroke={BLUE} strokeWidth={2} strokeDasharray="2 6" />
      <path d="M2182.600 1222A80 80 0 0 1 2102.600 1302" fill="none" stroke={RED} strokeWidth={2} />
      <PlaneBox x={2042.500} y={1161.500} hc={BLUE} vc={GREEN} />
      <Arrow x={2103} y={1222} dx={-1} dy={0} color={BLUE} />
      <Arrow x={2103} y={1222} dx={0} dy={-1} color={GREEN} />
      <path d="M2108 1227l1 2M2116 1235l1 2M2124 1243l1 2" stroke="#eee" />
      <circle cx={2132.500} cy={1252} r={5.200} fill="none" stroke="#e8e8e8" strokeWidth={1.200} />
      <Origin x={2102.600} y={1221.500} />
      <Axes x={1508.500} y={1513.500} h="y" v="z" />
    </>
  );
}

/* ---------- icons ---------- */

const K = "#111";

function Defs() {
  const stops = (a: string, b: string) => (<><stop offset="0" stopColor={a} /><stop offset="1" stopColor={b} /></>);
  return (
    <svg className="absolute h-0 w-0" aria-hidden="true">
      <defs>
        <linearGradient id="page" x1="0" y1="0" x2="1" y2="1">{stops("#ffffff", "#d2d2d2")}</linearGradient>
        <linearGradient id="metal" x1="0" y1="0" x2="0" y2="1">{stops("#e8e8e8", "#3a3a3a")}</linearGradient>
        <linearGradient id="gold" x1="0" y1="0" x2="1" y2="1">{stops("#ffd977", "#fdae13")}</linearGradient>
        <linearGradient id="cone" x1="0" y1="0" x2="1" y2="0"><stop offset="0" stopColor="#ffe9b0" /><stop offset="0.45" stopColor="#ffb733" /><stop offset="1" stopColor="#e87400" /></linearGradient>
        <linearGradient id="blue" x1="0" y1="0" x2="0" y2="1">{stops("#b9c8ff", "#5876f5")}</linearGradient>
        <radialGradient id="ballBlue" cx="0.4" cy="0.35" r="0.7">{stops("#ccd6ff", "#4667ee")}</radialGradient>
        <radialGradient id="ballDeep" cx="0.4" cy="0.25" r="0.8"><stop offset="0" stopColor="#b5ccff" /><stop offset="0.25" stopColor="#3f6be0" /><stop offset="1" stopColor="#03197a" /></radialGradient>
        <radialGradient id="ballGrey" cx="0.4" cy="0.3" r="0.75"><stop offset="0" stopColor="#fff" /><stop offset="0.5" stopColor="#b0b0b0" /><stop offset="1" stopColor="#1c1c1c" /></radialGradient>
        <radialGradient id="fire" cx="0.1" cy="0.95" r="1"><stop offset="0" stopColor="#ffd21a" /><stop offset="0.5" stopColor="#ff8a10" /><stop offset="1" stopColor="#e8451a" /></radialGradient>
      </defs>
    </svg>
  );
}

// Icon artwork for the horizontal bar; x units are 1/1.65 px, y units 1/3 px.
const bar: { tri?: boolean; o: 1 | 2; art: React.ReactNode }[] = [
  { o: 1, art: <><path d="M-10 186H27L40 208V298H-10Z" fill="url(#page)" stroke={K} strokeWidth="1.6" /><path d="M27 186V208H40" fill="#ccc" stroke={K} strokeWidth="1.4" /></> },
  { o: 1, art: <><path d="M84 289V218L94 209H110L115 220H133V250L95 289Z" fill="#f6d52c" stroke={K} strokeWidth="1.4" /><path d="M84 289L98 254L112 235H148L131 289Z" fill="url(#gold)" stroke={K} strokeWidth="1.6" /></> },
  { o: 1, tri: true, art: <><path d="M176 187H238V298H182L176 288Z" fill="#b3a34e" stroke={K} strokeWidth="1.6" /><rect x="185" y="190" width="43" height="50" fill="#e6e7e8" stroke="#666" /><rect x="189" y="256" width="31" height="41" fill="#9a9a9a" stroke={K} /><rect x="197" y="265" width="9" height="24" fill="#28324a" /><path d="M181 190V286" stroke="#e6dc96" /></> },
  { o: 1, art: <><path d="M265 262L278 240H332V275L325 298H270L265 290Z" fill="#4a4a4a" stroke={K} strokeWidth="1.6" /><path d="M265 262H318V296H270L265 290Z" fill="#888" stroke={K} /><path d="M277 240L287 187H325L314 240Z" fill="url(#page)" stroke={K} strokeWidth="1.400" /><ellipse cx="297" cy="214" rx="8" ry="13" fill="#999" /><path d="M268 276H316M318 262L332 242" stroke="#ddd" /></> },
  { o: 1, art: <><path d="M365 187H411V274L398 298H365Z" fill="url(#page)" stroke={K} strokeWidth="1.6" /><path d="M398 298V276H410" fill="#bbb" stroke={K} /><path d="M396 203L404 180L411 173H429V186L422 192L412 195L404 198Z" fill="#888" stroke={K} /><path d="M411 174H427V183Z" fill="#eee" /></> },
  { o: 1, art: <><path d="M465 190L474 214L493 266M500 190L491 214L474 266" stroke="#333" strokeWidth="3" fill="none" /><ellipse cx="468" cy="279" rx="7" ry="16" fill="none" stroke="#7f86b8" strokeWidth="2" /><ellipse cx="498" cy="279" rx="7" ry="16" fill="none" stroke="#7f86b8" strokeWidth="2" /></> },
  { o: 1, art: <><path d="M552 187H574L582 206V266H552Z" fill="url(#page)" stroke={K} strokeWidth="1.600" /><path d="M567 218H590L600 238V298H567Z" fill="url(#page)" stroke={K} strokeWidth="1.600" /><path d="M590 218V238H600M574 187V206H582" fill="none" stroke={K} /></> },
  { o: 1, art: <><rect x="645" y="193" width="42" height="105" rx="3" fill="#ffdd77" stroke={K} strokeWidth="1.8" /><path d="M653 192H679V206L674 212H658L653 206Z" fill="#999" stroke={K} strokeWidth="2" /></> },
  { o: 1, tri: true, art: <><path d="M738 236C750 212 775 214 789 238" fill="none" stroke="#3a3a3a" strokeWidth="5" /><path d="M780 224L793 238L784 244Z" fill="#555" /><path d="M730 262L734 222L754 246Z" fill={K} /></> },
  { o: 1, art: <path d="M842 288L830 253Q830 243 839 250L841 214Q845 206 847 214L849 240L848 203Q852 194 854 203L855 238L858 206Q861 200 863 208L862 240L866 218Q870 212 872 222V250L864 290Z" fill="url(#page)" stroke="#333" strokeWidth="1.500" /> },
  { o: 1, art: <><ellipse cx="943" cy="243" rx="9" ry="63" fill="none" stroke="#b4b4b8" strokeWidth="2" /><ellipse cx="943" cy="239" rx="34" ry="20" fill="none" stroke="#c0c0c4" strokeWidth="2" /><path d="M932 257H960M953 255V222" stroke={K} strokeWidth="2" /><path d="M929 257L938 245V270ZM953 212L948 232H959Z" fill={K} /></> },
  { o: 1, art: <><path d="M1033 254L1011 292" stroke="#222" strokeWidth="3" /><ellipse cx="1047" cy="229" rx="20" ry="38" fill="#f3f3f5" stroke="#909090" strokeWidth="1.600" /><path d="M1041 222H1053M1047 211V233M1041 240H1053" stroke="#444" strokeWidth="1.400" /></> },
  { o: 1, art: <><rect x="1114" y="194" width="50" height="74" fill="none" stroke="#777" strokeWidth="1.500" strokeDasharray="3 2" /><path d="M1111 275L1095 306" stroke="#222" strokeWidth="3" /><ellipse cx="1124" cy="250" rx="19" ry="33" fill="#f0f0f3" stroke="#888" strokeWidth="1.600" /></> },
  { o: 1, art: <><path d="M1191 186H1200L1191 202ZM1254 186H1245L1254 202ZM1191 298H1200L1191 282ZM1254 298H1245L1254 282Z" fill={K} /><path d="M1217 258L1200 292" stroke="#222" strokeWidth="3" /><ellipse cx="1229" cy="231" rx="20" ry="37" fill="#f3f3f5" stroke="#909090" strokeWidth="1.600" /></> },
  { o: 1, art: <><path d="M1304 262L1286 298" stroke="#222" strokeWidth="3" /><ellipse cx="1320" cy="234" rx="23" ry="41" fill="#f0f0e2" stroke="#888" strokeWidth="2" /><ellipse cx="1325" cy="224" rx="11" ry="20" fill="#f5e021" stroke="#b89d00" strokeWidth="1.500" /><ellipse cx="1315" cy="245" rx="8" ry="15" fill="#f5e021" stroke="#b89d00" strokeWidth="1.500" /></> },
  { o: 1, tri: true, art: <><path d="M1386 216C1400 192 1424 190 1434 214" fill="none" stroke="#444" strokeWidth="6" /><path d="M1377 238L1380 202L1397 222Z" fill={K} /><path d="M1403 278L1388 304" stroke="#222" strokeWidth="3" /><ellipse cx="1414" cy="258" rx="15" ry="31" fill="#f3f3f5" stroke="#909090" strokeWidth="1.600" /></> },
  { o: 1, tri: true, art: <><rect x="1467" y="190" width="64" height="108" fill="#c2c2c4" stroke={K} strokeWidth="2" /><path d="M1499 190V298M1467 244H1531" stroke={K} strokeWidth="2" /><path d="M1470 195H1482M1502 195H1513M1470 249H1482M1502 249H1513" stroke="#333a70" strokeWidth="2" /></> },
  { o: 2, tri: true, art: <><path d="M22 281H92" stroke="#ccc" strokeWidth="2" /><path d="M26 268V246L46 240L52 224H72L77 240L86 248V266Z" fill="#e61515" stroke="#8a0000" /><path d="M56 230H70L72 242H52Z" fill="#eee" /><ellipse cx="39" cy="266" rx="6" ry="11" fill="#222" /><ellipse cx="74" cy="266" rx="6" ry="11" fill="#222" /></> },
  { o: 2, tri: true, art: <><path d="M137 214L186 238L168 306L114 270ZM149 220L131 282M162 226L146 292M174 232L158 299M131 230L181 252M126 244L177 270M120 257L173 287" fill="none" stroke="#aaa" strokeWidth="1.200" /><path d="M152 249L162 224" stroke="#1a8a1a" strokeWidth="2" /><path d="M152 249L178 268" stroke="#d22" strokeWidth="2.500" /><rect x="148" y="242" width="8" height="15" fill="#fff" stroke={K} strokeWidth="1.500" /></> },
  { o: 2, tri: true, art: <><ellipse cx="243" cy="242" rx="29" ry="52" fill="#f0f0f3" stroke="#b0b0b0" strokeWidth="1.600" /><path d="M246 243H276" stroke={K} strokeWidth="2" /><rect x="238" y="235" width="8" height="15" fill="#fff" stroke={K} strokeWidth="1.500" /></> },
  { o: 2, tri: true, art: <><path d="M357 182H368V200M301 285V303H312" fill="none" stroke={K} strokeWidth="2" /><ellipse cx="323" cy="221" rx="9" ry="16" fill="#ffdd00" stroke="#8a5a00" strokeWidth="1.500" /><rect x="339" y="208" width="15" height="28" fill="#ffdd00" stroke="#8a5a00" strokeWidth="1.500" /><path d="M330 248L340 280H320Z" fill="#f4f0ea" stroke="#8a4a10" strokeWidth="2" /></> },
  { o: 2, tri: true, art: <><path d="M418 270C416 250 405 240 406 218A21 33 0 0 1 448 218C449 240 437 250 435 270L432 292Q426 304 421 292Z" fill="#a9a9a9" stroke="#444" strokeWidth="1.600" /><ellipse cx="424" cy="210" rx="9" ry="15" fill="#d9d9d9" /><path d="M420 274H434M421 284H433" stroke="#666" /></> },
  { o: 2, tri: true, art: <><path d="M508 236V208Q509 191 519 191Q529 191 530 208V236" fill="none" stroke={K} strokeWidth="2.6" /><rect x="500" y="233" width="39" height="57" rx="3" fill="#bdbdbd" stroke="#222" strokeWidth="1.600" /><path d="M506 248H533M506 258H533M506 268H533M506 278H533" stroke="#888" /></> },
  { o: 2, tri: true, art: <><path d="M588 200L612 252L611 296L592 262Z" fill="#c42020" stroke="#222" /><path d="M588 200L640 208L612 252Z" fill="#ff7d55" stroke="#5a0d0d" /><path d="M612 252L640 208V222L612 264Z" fill="#e02a20" /><path d="M612 262L640 220V236L612 276Z" fill="#f8f8f8" /><path d="M612 274L640 236V258L611 296Z" fill="#2740b5" stroke="#222" /><path d="M590 226L612 270" stroke="#eee" strokeWidth="3" /></> },
  { o: 2, tri: true, art: <>{["#ff2a1a", "#ff9a00", "#e8f000", "#4be000", "#00d890", "#00b4ff", "#1b3cff", "#7a20ff", "#e010e8", "#ff1080"].map((c, i) => {
      const a = (i / 10) * Math.PI * 2 - 1.4, b = ((i + 1.05) / 10) * Math.PI * 2 - 1.4;
      const p = (t: number) => `${703.5 + 24 * Math.cos(t)} ${242 + 44 * Math.sin(t)}`;
      return <path key={c} d={`M${p(a)}A24 44 0 0 1 ${p(b)}`} stroke={c} strokeWidth="8.5" fill="none" />;
    })}<ellipse cx="703.500" cy="242" rx="31" ry="56" fill="none" stroke="#222" /></> },
  { o: 2, art: <><ellipse cx="796" cy="241" rx="29" ry="52" fill="url(#ballGrey)" stroke={K} strokeWidth="2" /><path d="M767 250Q796 274 825 250M792 190Q778 240 792 292" fill="none" stroke={K} strokeWidth="1.500" /></> },
  { o: 2, tri: true, art: <><path d="M852 173H927M852 187H927M852 201H927M852 215H927M852 229H927M852 243H927M852 257H927M852 271H927M852 285H927M852 299H927M852 313H927M856 170V315M865 170V315M874 170V315M883 170V315M892 170V315M901 170V315M910 170V315M919 170V315" stroke="#bbb" /><ellipse cx="889" cy="241" rx="29" ry="52" fill="url(#ballGrey)" stroke={K} strokeWidth="2" /><path d="M860 250Q889 274 918 250M885 190Q871 240 885 292" fill="none" stroke={K} strokeWidth="1.500" /></> },
  { o: 2, tri: true, art: <><ellipse cx="984" cy="292" rx="28" ry="12" fill="#c4c6ca" /><ellipse cx="981" cy="240" rx="29" ry="52" fill="url(#ballDeep)" /><ellipse cx="970" cy="212" rx="7" ry="12" fill="#e6eeff" /></> },
  { o: 2, tri: true, art: <><path d="M1076 230L1098 250L1062 300L1055 290Z" fill="#f2f3f5" /><path d="M1070 212L1111 177L1100 250Q1090 226 1070 212Z" fill="url(#cone)" stroke="#5a3500" strokeWidth="1.500" /></> },
  { o: 2, tri: true, art: <><ellipse cx="1166" cy="242" rx="30" ry="47" fill="none" stroke="#3c2800" strokeWidth="9" strokeDasharray="8.500 7.500" /><ellipse cx="1166" cy="242" rx="29" ry="46" fill="none" stroke="#f0bb50" strokeWidth="7" strokeDasharray="6.500 9.500" strokeDashoffset="-1" /><ellipse cx="1166" cy="242" rx="24" ry="38" fill="#f3c468" stroke="#7a5000" strokeWidth="1.500" /><ellipse cx="1166" cy="245" rx="11" ry="19" fill="#eaebef" stroke="#7a5000" /><rect x="1156" y="194" width="18" height="54" rx="6" fill="url(#metal)" stroke="#444" /></> },
  { o: 2, tri: true, art: <><path d="M1224 187H1253M1224 246H1253M1230 198V234M1256 255V306M1290 255V306M1262 294H1284" stroke={K} strokeWidth="1.600" /><path d="M1230 192L1225 206H1235ZM1230 242L1225 228H1235ZM1258 294L1266 285V303ZM1288 294L1280 285V303Z" fill={K} /><rect x="1253" y="180" width="7" height="13" fill="#fff" stroke={K} strokeWidth="1.500" /><rect x="1253" y="240" width="7" height="13" fill="#fff" stroke={K} strokeWidth="1.500" /><rect x="1285" y="240" width="7" height="13" fill="#fff" stroke={K} strokeWidth="1.500" /></> },
  { o: 2, tri: true, art: <><ellipse cx="1351" cy="242" rx="38" ry="69" fill="#a3cc88" stroke="#6b6f6b" strokeWidth="2.500" /><ellipse cx="1340" cy="215" rx="20" ry="34" fill="#bfe0a6" /><path d="M1316 270L1324 262L1328 240L1333 262L1341 250L1345 228L1349 232L1343 262L1352 276L1374 290L1351 306L1330 300Z" fill="#3d4a3d" /><path d="M1345 256L1388 210M1352 176L1356 240" fill="none" stroke="#557055" /></> },
  { o: 2, tri: true, art: <><ellipse cx="1444" cy="242" rx="31" ry="56" fill="#4a68dc" stroke="#3350b8" /><text transform="translate(1428 283) scale(1.65 3)" fontFamily="'Liberation Serif', serif" fontWeight="700" fontSize="39" fill="#fff">?</text></> },
];

function BarIcon({ k }: { k: number }) {
  const it = bar[k];
  const x = it.o === 1 ? 92.43 * k - 23.1 : 92.43 * k - 1558.1;
  return (
    <div className="relative h-14 w-14 shrink-0">
      <svg className={`h-14 w-14 overflow-visible ${ns}`} viewBox={`${x} 156 92.43 168`} preserveAspectRatio="none">{it.art}</svg>
      {it.tri && <Corner />}
    </div>
  );
}

function Corner() {
  return (
    <svg className="absolute right-[3px] bottom-[2px] h-[12px] w-[12px]" viewBox="0 0 12 12">
      <path d="M11.500 .5V11.500H.5Z" fill="#808083" stroke="#4a4a4e" strokeWidth="0.8" />
    </svg>
  );
}

const nodes = (...p: number[][]) => p.map(([x, y], i) => <rect key={i} x={x - 7} y={y - 7} width="14" height="14" fill="#fff" stroke={K} strokeWidth="3.500" />);

// Left and right palette columns, 3 units per pixel.
const paletteA: { tri?: boolean; art: React.ReactNode }[] = [
  { art: <path d="M-4 122L24 152L10 155L18 180L8 186L-4 160Z" fill="#fff" stroke="#333" strokeWidth="4" /> },
  { tri: true, art: <><path d="M-10 278L46 343" stroke="#888" strokeWidth="4" />{nodes([47, 343])}</> },
  { tri: true, art: <><ellipse cx="0" cy="483" rx="54" ry="54" fill="none" stroke="#777" strokeWidth="4" /><path d="M4 480L38 445" stroke="#aaa" strokeWidth="3" />{nodes([38, 445], [3, 481])}</> },
  { tri: true, art: <><path d="M-10 602Q30 616 52 652" fill="none" stroke="#666" strokeWidth="4" /><path d="M-5 684L48 656" stroke="#bbb" strokeWidth="3" />{nodes([52, 653])}</> },
  { tri: true, art: <><path d="M-10 773H26L47 816L26 859H-10" fill="none" stroke="#888" strokeWidth="4" /><path d="M-10 859H26" stroke={K} strokeWidth="4" /><path d="M0 817H40" stroke="#bbb" strokeWidth="3" />{nodes([47, 817], [-2, 817])}</> },
  { tri: true, art: <><path d="M-20 942H47L20 1034L-20 1020Z" fill="url(#blue)" stroke="#222" strokeWidth="3.500" /><path d="M-20 985L32 990M12 942L0 1025" stroke="#223" strokeWidth="3" />{nodes([47, 944], [20, 1034])}</> },
  { tri: true, art: <><path d="M-30 1105L0 1108L46 1125V1188L4 1214L-30 1200Z" fill="#3350c4" stroke={K} strokeWidth="3" /><path d="M-30 1108L44 1127L6 1160L-30 1150Z" fill="#b9c8ff" /><path d="M-30 1150L6 1160V1212L-30 1200Z" fill="#5876f5" /></> },
  { tri: true, art: <><ellipse cx="4" cy="1276" rx="34" ry="16" fill="#f4f4f6" stroke="#888" strokeWidth="4" /><path d="M-20 1332Q30 1330 63 1311V1368Q40 1384 -20 1386Z" fill="url(#blue)" stroke="#222" strokeWidth="3" /><ellipse cx="6" cy="1356" rx="30" ry="18" fill="#aabcff" stroke="#fff" strokeWidth="7" /></> },
  { art: <><path d="M-20 1440Q18 1430 18 1452Q8 1462 18 1474L-10 1485Z" fill="#ffb400" stroke={K} strokeWidth="3" /><path d="M0 1486Q14 1466 28 1482Q26 1498 42 1496Q64 1500 60 1520Q40 1515 44 1538Q42 1552 26 1550Q26 1530 10 1530L-10 1515Z" fill="#fff" stroke={K} strokeWidth="3" /></> },
];

const paletteA2: { tri?: boolean; art: React.ReactNode }[] = [
  { art: <><path d="M4 76H41L12 152H4Z" fill="#14277e" /><path d="M8 150L22 136L58 168L42 187Z" fill="#eef" stroke="#777" strokeWidth="3.500" /></> },
  { tri: true, art: <><circle cx="24" cy="308" r="23" fill="#14277e" stroke={K} strokeWidth="6" /><circle cx="0" cy="276" r="28" fill="#5876f5" stroke={K} strokeWidth="6" /></> },
  { art: <><path d="M-10 430Q40 450 34 520" fill="none" stroke="#222" strokeWidth="5" /><path d="M32 492V522" stroke={K} strokeWidth="7" />{nodes([34, 491])}</> },
  { art: <text x="-48" y="676" fontFamily="'Liberation Serif', serif" fontWeight="700" fontSize="138" fill="#4261d8" stroke="#14225e" strokeWidth="3">T</text> },
  { art: <><rect x="22" y="755" width="37" height="34" fill="url(#blue)" stroke={K} strokeWidth="3" /><rect x="-4" y="773" width="41" height="34" fill="url(#blue)" stroke={K} strokeWidth="3" /><rect x="22" y="818" width="37" height="34" fill="url(#blue)" stroke={K} strokeWidth="3" /></> },
  { tri: true, art: <><path d="M-20 900L0 898L60 918V985L36 1000V965L-20 955Z" fill="#7e97ff" stroke={K} strokeWidth="3.500" /><path d="M60 918V985L40 996L36 945Z" fill="#2f49ba" /><path d="M-20 975L36 968V1002L12 1020L-20 1010Z" fill="#eee" stroke={K} strokeWidth="3" /></> },
  { tri: true, art: <>{[1083, 1123, 1163].map((y) => <g key={y}><rect x="28" y={y - 11} width="22" height="22" fill="url(#blue)" stroke={K} strokeWidth="4" /><rect x="-12" y={y - 11} width="20" height="22" fill="url(#blue)" stroke={K} strokeWidth="4" /></g>)}</> },
  { tri: true, art: <><path d="M-10 1238L10 1232L28 1242L-10 1330Z" fill="#eee" stroke={K} strokeWidth="3" /><path d="M22 1246L56 1256L44 1320Q30 1345 8 1348L-4 1340Q20 1300 22 1246Z" fill="url(#blue)" stroke="#14225e" strokeWidth="3.500" /></> },
  { tri: true, art: <><path d="M-20 1425L8 1418L14 1424L0 1490H-20Z" fill="#888" stroke="#222" strokeWidth="3" /><path d="M28 1420L60 1488Q30 1512 0 1488Z" fill="url(#page)" stroke="#333" strokeWidth="3" /><path d="M28 1422L60 1488Q50 1500 34 1500Z" fill="#777" /></> },
];

const paletteB: { tri?: boolean; art: React.ReactNode }[] = [
  { tri: true, art: <circle cx="170" cy="149" r="11" fill="#fff" stroke="#444" strokeWidth="4" /> },
  { tri: true, art: <><path d="M120 276C190 258 210 282 209 318C206 360 180 366 120 353" fill="none" stroke="#777" strokeWidth="4.500" />{nodes([120, 276], [206, 263], [120, 353], [215, 362])}</> },
  { tri: true, art: <><ellipse cx="170" cy="485" rx="57" ry="39" fill="none" stroke="#777" strokeWidth="4.500" /><path d="M170 445V481H224" fill="none" stroke="#bbb" strokeWidth="4" />{nodes([170, 445], [170, 481], [224, 481])}</> },
  { tri: true, art: <><rect x="119" y="619" width="103" height="68" fill="none" stroke="#777" strokeWidth="4" /><path d="M119 687V619H222" fill="none" stroke={K} strokeWidth="5" />{nodes([220, 622], [120, 685])}</> },
  { tri: true, art: <><path d="M120 774H222V870" fill="none" stroke="#aaa" strokeWidth="4" /><path d="M120 776H165Q220 780 220 835V870" fill="none" stroke={K} strokeWidth="7" />{nodes([120, 776], [220, 871])}</> },
  { tri: true, art: <><path d="M122 962L162 931L193 940L154 971Z" fill="#fff" stroke={K} strokeWidth="4" /><path d="M154 971L193 940Q220 955 222 985L183 1010Q180 980 154 971Z" fill="url(#blue)" stroke={K} strokeWidth="4" /><path d="M183 1010L222 985V1018L182 1045Z" fill="#f2f2f2" stroke={K} strokeWidth="4" /></> },
  { tri: true, art: <><circle cx="148" cy="1178" r="38" fill="url(#ballBlue)" stroke={K} strokeWidth="4" /><circle cx="191" cy="1136" r="39" fill="url(#ballBlue)" stroke={K} strokeWidth="4" /><path d="M153 1138Q190 1155 229 1136M180 1098Q170 1140 188 1174M112 1184Q150 1198 186 1184M136 1142Q128 1180 140 1214" fill="none" stroke="#1f2f70" strokeWidth="3.500" /></> },
  { tri: true, art: <><path d="M163 1270L231 1294Q210 1340 178 1381L109 1356Q150 1322 163 1270Z" fill="url(#blue)" stroke="#111a4a" strokeWidth="4" /><path d="M186 1278Q170 1325 132 1364M209 1286Q190 1335 155 1372M150 1302L216 1326M134 1330L200 1354" fill="none" stroke="#1b2a70" strokeWidth="3.500" /><path d="M163 1270L216 1326M109 1356L200 1354" stroke="#1b2a70" strokeWidth="2" /></> },
  { art: <><path d="M99 1572V1494L123 1452L124 1522L205 1446L166 1526L228 1530L176 1558L182 1572Z" fill="url(#fire)" /><path d="M99 1494L123 1452L124 1522L205 1446L166 1526L228 1530L176 1558L186 1570" fill="none" stroke="#7a2800" strokeWidth="3.500" /></> },
];

const paletteB2: { tri?: boolean; art: React.ReactNode }[] = [
  { art: <><rect x="115" y="128" width="107" height="26" fill="#fff" stroke={K} strokeWidth="4" /><path d="M171 76H209L174 154H171Z" fill="#14277e" /></> },
  { art: <><circle cx="168" cy="261" r="22" fill="#6482fb" stroke="#333" strokeWidth="4" /><circle cx="136" cy="319" r="22" fill="#fff" stroke="#222" strokeWidth="4" /><circle cx="204" cy="319" r="22" fill="#14277e" stroke="#222" strokeWidth="4" /></> },
  { tri: true, art: <><path d="M107 409H145" stroke={K} strokeWidth="3" strokeDasharray="4 3" /><path d="M158 414L218 470L222 522" fill="none" stroke="#aaa" strokeWidth="4" strokeDasharray="5 5" /><path d="M107 437C170 425 205 460 194 522" fill="none" stroke="#444" strokeWidth="7" />{nodes([151, 407], [223, 478])}</> },
  { tri: true, art: <><path d="M155 642L185 612M166 611H186V630" fill="none" stroke="#333" strokeWidth="4" /><rect x="118" y="642" width="36" height="35" fill="url(#page)" stroke={K} strokeWidth="4" /><rect x="190" y="570" width="38" height="36" fill="url(#blue)" stroke={K} strokeWidth="4" /></> },
  { art: <><rect x="106" y="741" width="31" height="84" fill="url(#page)" stroke={K} strokeWidth="4" /><path d="M140 754Q175 756 190 774M172 774H191V756" fill="none" stroke="#444" strokeWidth="4" /><path d="M153 829L212 771L231 791L172 849Z" fill="url(#blue)" stroke={K} strokeWidth="4" /></> },
  { tri: true, art: <><path d="M135 965H232L205 995H108Z" fill="url(#blue)" stroke={K} strokeWidth="4.500" /><path d="M139 978V920M170 978V920M202 978V920" stroke="#fff" strokeWidth="10" /><path d="M127 926L139 904L151 926ZM158 926L170 904L182 926ZM190 926L202 904L214 926Z" fill="#fff" /></> },
  { tri: true, art: <><rect x="145" y="1069" width="50" height="26" fill="url(#page)" stroke={K} strokeWidth="4" /><rect x="158" y="1107" width="24" height="23" fill="#f4f4f4" stroke={K} strokeWidth="4" /><rect x="149" y="1143" width="42" height="36" fill="url(#page)" stroke={K} strokeWidth="4" /><path d="M170 1058V1189" stroke="#cc1515" strokeWidth="7" /></> },
  { tri: true, art: <path d="M114 1296Q124 1288 132 1300L139 1314Q168 1262 222 1236Q180 1275 156 1322L137 1336Q132 1310 114 1296Z" fill={K} /> },
  { tri: true, art: <><path d="M168 1430L216 1478L184 1515L123 1493Z" fill="#f8cb58" stroke="#222" strokeWidth="4" /><path d="M168 1432L215 1478L184 1513Z" fill="#c99a26" /><path d="M178 1412L196 1392L215 1386H240V1407L222 1414L205 1410Z" fill="#bbb" stroke="#333" strokeWidth="3" /><path d="M212 1392L236 1388V1404L222 1408Z" fill="#fff" /><path d="M238 1384V1410" stroke={K} strokeWidth="5" /></> },
];

function PaletteColumn({ x, upper, lower }: { x: number; upper: typeof paletteA; lower: typeof paletteA }) {
  return (
    <div className="flex w-14 shrink-0 flex-col">
      {upper.map((it, i) => (
        <div key={i} className="relative h-14 w-14">
          <svg className="h-14 w-14 overflow-visible" viewBox={`${x} ${63 + 168 * i} 168 168`}>{it.art}</svg>
          {it.tri && <Corner />}
        </div>
      ))}
      {lower.map((it, i) => (
        <div key={i} className="relative h-14 w-14">
          <svg className="h-14 w-14 overflow-visible" viewBox={`${x} ${-1446.7 + 165.68 * (i + 9)} 168 165.68`} preserveAspectRatio="none">{it.art}</svg>
          {it.tri && <Corner />}
        </div>
      ))}
    </div>
  );
}

/* ---------- application shell ---------- */

const tabs = [
  { t: "CPlanes", w: "w-[170px]" },
  { t: "Set View", w: "w-[179px]" },
  { t: "Display", w: "w-[161px]" },
  { t: "Select", w: "w-[143px]" },
  { t: "Viewport Layout", w: "w-[282px]" },
  { t: "Visibility", w: "w-[174px]" },
  { t: "Transform", w: "w-[196px]" },
  { t: "Curve Tools", w: "w-[218px]" },
  { t: "Surface Tools", w: "w-[239px]" },
  { t: "Solid Tools", w: "w-[208px]" },
  { t: "SubD Tools", w: "w-[215px]" },
  { t: "Mesh Tools", w: "w-[214px]" },
  { t: "Render Tools", w: "w-[200px]" },
];

const label = "inline-block origin-left scale-x-[0.95] whitespace-nowrap [word-spacing:3px]";

export default function App() {
  return (
    <div className="flex h-[1636px] w-[2775px] flex-col overflow-hidden bg-[#eaebef] font-['Noto_Sans',sans-serif] text-[#2b2b2d]">
      <Defs />
      <nav className="flex h-[52px] shrink-0 text-[29.5px] leading-[55px]">
        <div className="mt-[2px] w-[169px] shrink-0 rounded-tr-[6px] border-t border-r border-[#c0c4dc] pl-[18px] leading-[51px]">
          <span className="inline-block origin-left scale-x-[0.93]">Standard</span>
        </div>
        <div className="flex flex-1 overflow-hidden border-b border-[#c0c4dc] pl-[31px]">
          {tabs.map((t) => (
            <div key={t.t} className={`${t.w} shrink-0`}>
              <span className={label}>{t.t}</span>
            </div>
          ))}
        </div>
      </nav>
      <div className="-ml-[14px] flex h-[68px] shrink-0">
        {bar.map((_, k) => <BarIcon key={k} k={k} />)}
      </div>
      <div className="flex min-h-0 flex-1">
        <aside className="w-[94px] shrink-0 overflow-hidden">
          <div className="mt-[4px] h-[3px] w-[86px] border-y border-[#c6d2e6]" />
          <div className="-ml-[26px] mt-[4px] flex">
            <PaletteColumn x={-78} upper={paletteA} lower={paletteA2} />
            <PaletteColumn x={90} upper={paletteB} lower={paletteB2} />
          </div>
        </aside>
        <main className="flex min-w-0 flex-1 flex-col">
          <div className="grid h-[1466px] w-[2675px] grid-cols-[1334px_1334px] grid-rows-[730px_729px] gap-x-[7px] gap-y-[7px]">
            <Viewport name="Top" label="w-[99px]" x={95} y={121} w={1333} h={729}><TopView /></Viewport>
            <Viewport name="Perspective" active label="w-[210px]" x={1436} y={121} w={1333} h={729}><PerspectiveView /></Viewport>
            <Viewport name="Front" label="w-[123px]" x={95} y={858} w={1333} h={728}><FrontView /></Viewport>
            <Viewport name="Right" label="w-[122px]" x={1436} y={858} w={1333} h={728}><RightView /></Viewport>
          </div>
          <footer className="flex h-[50px] text-[29.5px] leading-[58px]">
            <svg className="mr-[9px] h-[50px] w-[14px]" viewBox="0 0 14 50">
              <path d="M.5 2V20Q2 32 13.500 38" fill="none" stroke="#c6cad8" />
            </svg>
            <div className="h-[50px] w-[161px] border-r border-[#c6cad8]"><span className={label}>Perspective</span></div>
            <div className="w-[88px] pl-[24px]"><span className={label}>Top</span></div>
            <div className="w-[106px] pl-[24px]"><span className={label}>Front</span></div>
            <div className="w-[133px] pl-[24px]"><span className={label}>Right</span></div>
            <svg className="mt-[20px] h-[18px] w-[18px]" viewBox="0 0 18 18">
              <path d="M7 1h4v6h6v4h-6v6H7v-6H1V7h6Z" fill="#f4f5f8" stroke="#a8abb3" />
            </svg>
          </footer>
        </main>
      </div>
    </div>
  );
}
